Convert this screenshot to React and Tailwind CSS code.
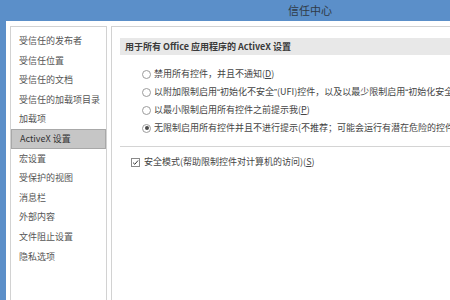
const sideItems = [
    "受信任的发布者",
    "受信任位置",
    "受信任的文档",
    "受信任的加载项目录",
    "加载项",
    "ActiveX 设置",
    "宏设置",
    "受保护的视图",
    "消息栏",
    "外部内容",
    "文件阻止设置",
    "隐私选项",
];

const Radio = ({ checked }) => (
    <span className="w-[9px] h-[9px] rounded-full border border-[#9c9c9c] bg-white flex items-center justify-center shrink-0">
        {checked && <span className="w-[4px] h-[4px] rounded-full bg-[#4a4a4a]"></span>}
    </span>
);

// narrow curly quotes, like the half-width ones in the dialog
const Q = ({ children }) => (
    <span style={{ fontFamily: '"Liberation Sans", sans-serif' }}>{children}</span>
);

const options = [
    { id: "D", text: <>禁用所有控件，并且不通知(<span className="underline">D</span>)</> },
    {
        id: "R",
        text: (
            <>
                以附加限制启用<Q>“</Q>初始化不安全<Q>”</Q>(UFI)控件，以及以最少限制启用<Q>“</Q>初始化安全<Q>”</Q>(SFI)控件之前提示我(<span className="underline">R</span>)
            </>
        ),
    },
    { id: "P", text: <>以最小限制启用所有控件之前提示我(<span className="underline">P</span>)</> },
    {
        id: "N",
        checked: true,
        text: <>无限制启用所有控件并且不进行提示(不推荐；可能会运行有潜在危险的控件)(<span className="underline">N</span>)</>,
    },
];

export default function App() {
    return (
        <div className="w-[450px] h-[300px] overflow-hidden flex flex-col bg-white text-[9px] text-[#444]" style={{ fontFamily: '"Noto Sans CJK SC", "Noto Sans", sans-serif' }}>
            <div className="h-[21px] shrink-0 bg-[#5b8fc9] flex items-center justify-center pl-[170px]">
                <span className="text-[11px] text-[#2f3a46]">信任中心</span>
            </div>
            <div className="flex flex-1 min-h-0">
                <div className="w-[6px] shrink-0 bg-[#5b8fc9]"></div>
                <div className="flex flex-1 min-w-0 pl-[4px] pt-[5px] gap-[4px]">
                    {/* left menu */}
                    <div className="w-[97px] shrink-0 border border-b-0 border-[#d2d2d2] pt-[4px] flex flex-col">
                        {sideItems.map((item) => (
                            <div
                                key={item}
                                className={`h-[19.6px] flex items-center pl-[8px] whitespace-nowrap ${
                                    item === "ActiveX 设置" ? "bg-[#c6c6c6] border border-[#a8a8a8] text-[#333]" : "text-[#555]"
                                }`}
                            >
                                {item}
                            </div>
                        ))}
                    </div>
                    {/* right settings */}
                    <div className="flex-1 min-w-0 border-l border-t border-[#d2d2d2] pl-[8px] pt-[11px] overflow-hidden">
                        <div className="h-[17px] bg-[#e8e8e8] flex items-center pl-[5px] font-bold text-[#3a3a3a] whitespace-nowrap">
                            用于所有 Office 应用程序的 ActiveX 设置
                        </div>
                        <div className="mt-[10px] flex flex-col pl-[22px]">
                            {options.map((o) => (
                                <div key={o.id} className="h-[18px] flex items-center gap-[3px] whitespace-nowrap">
                                    <Radio checked={o.checked} />
                                    <span>{o.text}</span>
                                </div>
                            ))}
                        </div>
                        <div className="mt-[9px] h-px bg-[#d4d4d4]"></div>
                        <div className="mt-[6px] h-[18px] flex items-center gap-[4px] pl-[11px] whitespace-nowrap">
                            <span className="w-[9px] h-[9px] border border-[#8a8a8a] bg-white flex items-center justify-center shrink-0">
                                <svg viewBox="0 0 10 10" className="w-[7px] h-[7px]">
                                    <path d="M1.5 5.2 L4 7.6 L8.6 2.2" fill="none" stroke="#333" strokeWidth="1.4" />
                                </svg>
                            </span>
                            <span>
                                安全模式(帮助限制控件对计算机的访问)(<span className="underline">S</span>)
                            </span>
                        </div>
                    </div>
                </div>
            </div>
        </div>
    );
}
